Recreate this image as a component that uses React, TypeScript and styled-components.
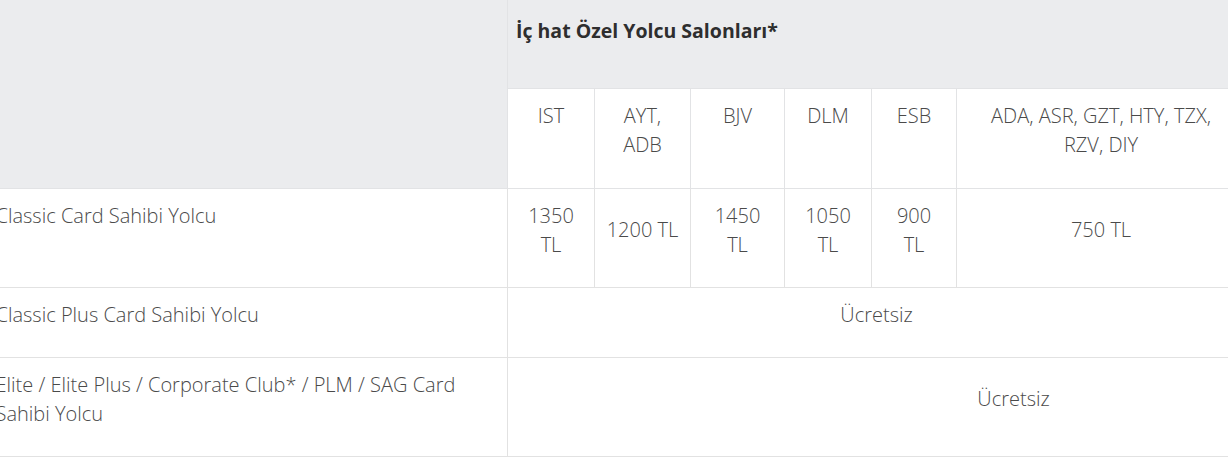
import styled, { createGlobalStyle } from 'styled-components';

const GlobalStyle = createGlobalStyle`
    body {
        margin: 0;
        background: #ffffff;
        overflow: hidden;
        font-family: "Open Sans", "Noto Sans", sans-serif;
    }
`;

const Wrapper = styled.div`
    width: 1228px;
    height: 468px;
    overflow: hidden;
`;

const Table = styled.table`
    margin-left: -13px;
    width: 1258px;
    table-layout: fixed;
    border-collapse: collapse;
    font-size: 20px;
    font-weight: 300;
    line-height: 29px;
    color: #4a4a4a;
`;

const HeadCell = styled.th<{ $tone?: 'gray' | 'white' }>`
    background: ${(p) => (p.$tone === 'white' ? '#ffffff' : '#ebecee')};
    border: 1px solid #e2e3e5;
    border-top: none;
    padding: 12px 8px 29px;
    font-weight: 300;
    text-align: center;
    vertical-align: top;
`;

const TitleCell = styled(HeadCell)`
    height: 88px;
    box-sizing: border-box;
    padding-top: 16px;
    text-align: left;
    font-size: 19.5px;
    font-weight: 700;
    color: #2e2e2e;
    border-left-color: #f4f5f6;
`;

const LabelCell = styled.td`
    border: 1px solid #e2e2e2;
    border-left: none;
    padding: 12px 8px 28px;
    vertical-align: top;
    text-align: left;
`;

const ValueCell = styled.td<{ $shift?: number }>`
    border: 1px solid #e2e2e2;
    padding: 12px 8px 28px;
    padding-left: ${(p) => 8 + (p.$shift ?? 0)}px;
    text-align: center;
    vertical-align: middle;
`;

const airports = ['IST', 'AYT,\nADB', 'BJV', 'DLM', 'ESB', 'ADA, ASR, GZT, HTY, TZX,\nRZV, DIY'];
const prices = ['1350\nTL', '1200 TL', '1450\nTL', '1050\nTL', '900\nTL', '750 TL'];
const widths = [520, 87, 96, 94, 87, 85, 289];

const lines = (text: string) =>
    text.split('\n').map((line, i) => (
        <span key={i}>
            {i > 0 && <br />}
            {line}
        </span>
    ));

const App = () => {
    return (
        <Wrapper>
            <GlobalStyle />
            <Table>
                <colgroup>
                    {widths.map((w, i) => (
                        <col key={i} style={{ width: w }} />
                    ))}
                </colgroup>
                <thead>
                    <tr>
                        <HeadCell rowSpan={2} />
                        <TitleCell colSpan={6}>İç hat Özel Yolcu Salonları*</TitleCell>
                    </tr>
                    <tr>
                        {airports.map((a) => (
                            <HeadCell key={a} $tone="white">
                                {lines(a)}
                            </HeadCell>
                        ))}
                    </tr>
                </thead>
                <tbody>
                    <tr>
                        <LabelCell>Classic Card Sahibi Yolcu</LabelCell>
                        {prices.map((p) => (
                            <ValueCell key={p}>{lines(p)}</ValueCell>
                        ))}
                    </tr>
                    <tr>
                        <LabelCell>Classic Plus Card Sahibi Yolcu</LabelCell>
                        <ValueCell colSpan={6}>Ücretsiz</ValueCell>
                    </tr>
                    <tr>
                        <LabelCell>
                            Elite / Elite Plus / Corporate Club* / PLM / SAG Card
                            <br />
                            Sahibi Yolcu
                        </LabelCell>
                        <ValueCell colSpan={6} $shift={274}>
                            Ücretsiz
                        </ValueCell>
                    </tr>
                </tbody>
            </Table>
        </Wrapper>
    );
};

export default App;
